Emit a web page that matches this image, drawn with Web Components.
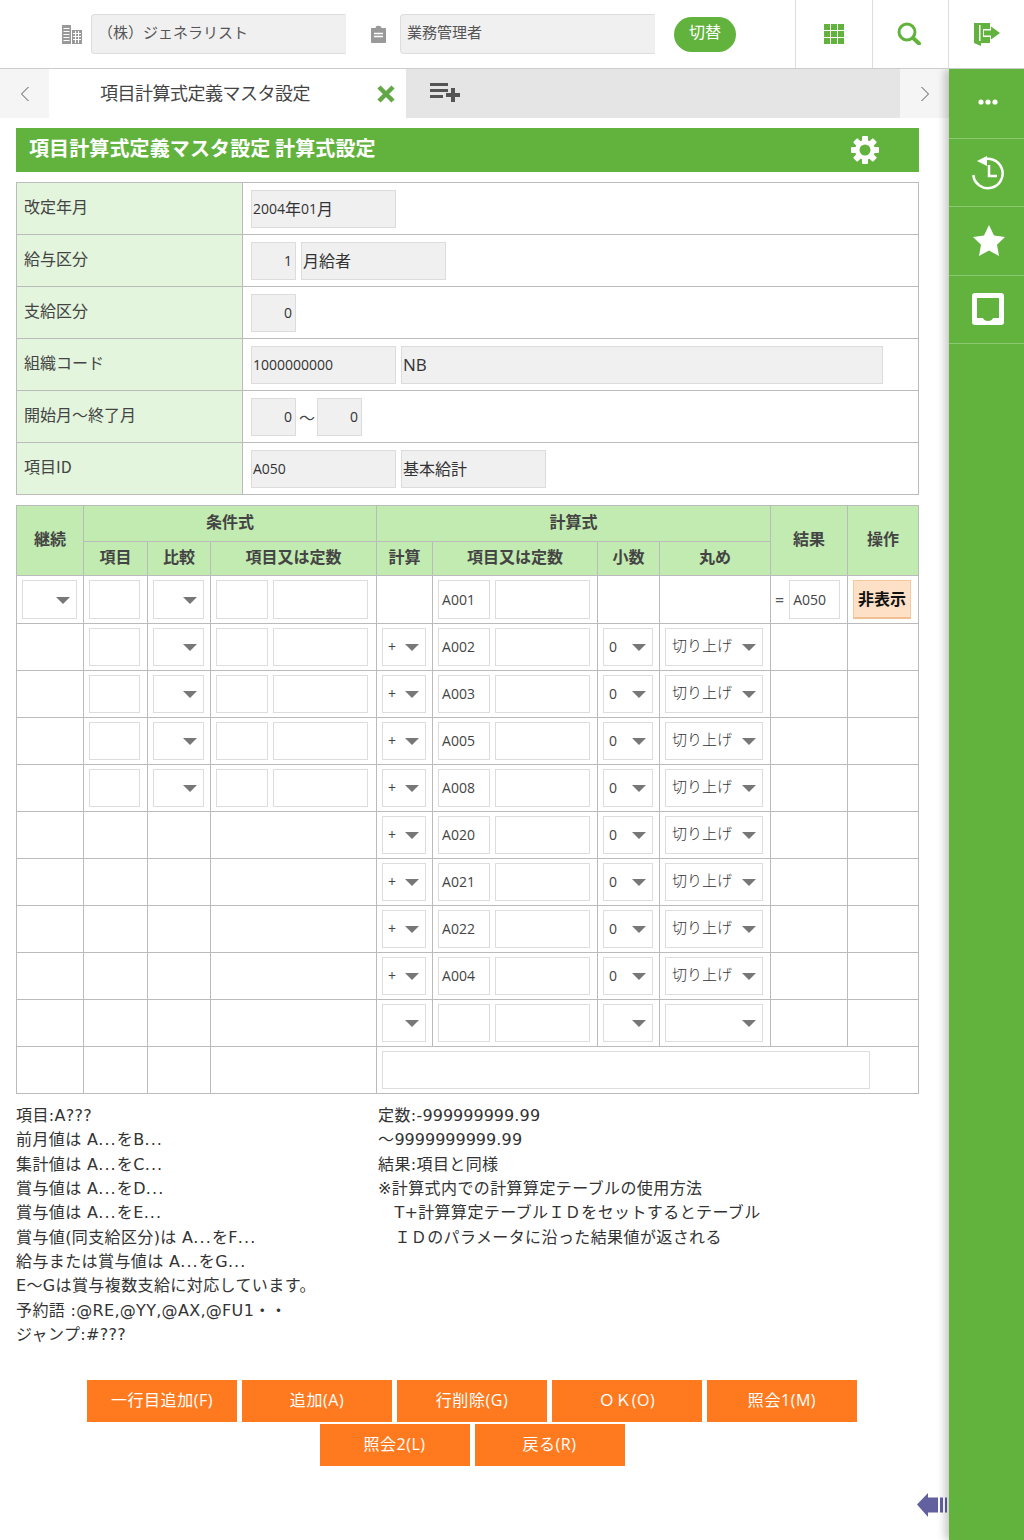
<!DOCTYPE html>
<html lang="ja"><head><meta charset="utf-8"><title>項目計算式定義マスタ設定</title>
<style>
html,body{margin:0;padding:0}
body{height:1540px;width:1024px;overflow:hidden;background:#fff;color:#333;font-family:"Noto Sans CJK JP",sans-serif;font-size:16px;display:flex;flex-direction:column;position:relative}
#row{flex:1;display:flex;min-height:0}
#main{flex:1;min-width:0;display:flex;flex-direction:column}
#content{padding:10px 30px 0 16px;display:flex;flex-direction:column}
x-back-arrow{position:absolute;left:917px;top:1492px}
</style></head><body>
<x-app-header></x-app-header>
<div id="row">
 <div id="main">
  <x-tab-bar></x-tab-bar>
  <div id="content">
   <x-title-bar>項目計算式定義マスタ設定 計算式設定</x-title-bar>
   <x-info-table></x-info-table>
   <x-calc-table></x-calc-table>
   <x-notes></x-notes>
   <x-action-buttons></x-action-buttons>
  </div>
 </div>
 <x-side-rail></x-side-rail>
</div>
<x-back-arrow></x-back-arrow>
<script>
const esc=s=>s.replace(/&/g,'&amp;').replace(/</g,'&lt;');
const mix=s=>esc(s).replace(/[^\x00-\x7f]+/g,m=>`<span class="j">${m}</span>`);
const noteMix=s=>esc(s).replace(/[^\x00-\x7f]+|\d{4,}|\.\.\./g,m=>{
  const c=/^\d/.test(m)?'d':m==='...'?'o':'j';
  return `<span class="${c}">${m}</span>`;
});
function def(name,css,html){
  customElements.define(name,class extends HTMLElement{
    connectedCallback(){
      if(this.shadowRoot)return;
      const r=this.attachShadow({mode:'open'});
      r.innerHTML=`<style>${css}</style>`+(typeof html==='function'?html(this):html);
    }
  });
}
def('x-field',`
:host{display:inline-block;box-sizing:border-box;flex:none;border:1px solid #ddd;background:#fff;font:14px/1 "Open Sans","Noto Sans CJK JP",sans-serif;color:#444;height:38px;vertical-align:top}
:host([ro]){background:#f0f0f0;border-color:#dcdcdc;color:#333}
:host([t]){height:39px}
:host([lg]){font-size:17px}
div{height:100%;display:flex;align-items:center;padding:0 3px 0 3px;box-sizing:border-box;white-space:pre}
:host([ro]) div{padding:0 2px 1px 1px}
:host([right]) div{justify-content:flex-end;padding-right:3px}
.j{font-size:16px;font-family:"Noto Sans CJK JP",sans-serif;position:relative;top:-1px}
`,e=>{e.style.width=e.getAttribute('w')+'px';return `<div>${mix(e.getAttribute('v')||'')}</div>`});
def('x-sel',`
:host{display:inline-flex;box-sizing:border-box;flex:none;position:relative;align-items:center;height:38px;border:1px solid #ddd;background:#fff;font:14px/1 "Open Sans","Noto Sans CJK JP",sans-serif;color:#444;padding:0 0 0 5px}
:host([t]){height:39px}
span{white-space:pre}
.j{font-size:15px;font-family:"Noto Sans CJK JP",sans-serif;font-weight:300;margin-left:1px;position:relative;top:-2px;color:#333}
i{position:absolute;right:6px;top:50%;margin-top:-3px;width:0;height:0;border-left:7px solid transparent;border-right:7px solid transparent;border-top:7px solid #777}
`,e=>{e.style.width=e.getAttribute('w')+'px';return `<span>${mix(e.getAttribute('v')||'')}</span><i></i>`});

def('x-app-header',`
:host{display:flex;align-items:center;height:68px;border-bottom:1px solid #ccc;background:#fff;position:relative;z-index:2;flex:none}
.ic{flex:none;display:block}
.box{box-sizing:border-box;width:255px;height:40px;background:#f0f0f0;border:1px solid #ddd;border-right-color:#eee;border-radius:4px 0 0 4px;display:flex;align-items:center;padding:0 6px 6px;color:#555;font-size:15px;flex:none}
.sw{margin-left:19px;width:62px;height:35px;border-radius:18px;background:#62b33d;color:#fff;font-size:16px;display:flex;align-items:center;justify-content:center;padding-bottom:6px;box-sizing:border-box;flex:none}
.cells{margin-left:auto;display:flex;height:100%}
.c{box-sizing:border-box;width:76px;height:100%;border-left:1px solid #ddd;display:flex;align-items:center;justify-content:center}
.c:first-child{width:77px}
`,`
<svg class="ic" style="margin-left:62px" width="20" height="19" viewBox="0 0 20 19"><path fill="#999" d="M0 0h9v19H0zM10 5h10v14H10z"/><path stroke="#fff" stroke-width="1" d="M1.500 3.500h6M1.500 6.500h6M1.500 9.500h6M1.500 12.500h6M1.500 15.500h6M11 8.500h8M11 11.500h8M11 14.500h8M13.500 6v12M16.500 6v12"/></svg>
<div class="box" style="margin-left:9px">（株）ジェネラリスト</div>
<svg class="ic" style="margin-left:25px" width="15" height="18" viewBox="0 0 15 18"><path fill="#999" d="M1 3h3.500c0-3 6-3 6 0H14c.6 0 1 .4 1 1v13c0 .6-.4 1-1 1H1c-.6 0-1-.4-1-1V4c0-.6.400-1 1-1z"/><path stroke="#fff" stroke-width="1.500" d="M3 8.500h9M3 11.500h9"/></svg>
<div class="box" style="margin-left:14px">業務管理者</div>
<div class="sw">切替</div>
<div class="cells">
<div class="c"><svg style="margin-top:-1px" width="20" height="20" viewBox="0 0 20 20" fill="#62b33d"><path d="M0 0h6v6H0zM7 0h6v6H7zM14 0h6v6h-6zM0 7h6v6H0zM7 7h6v6H7zM14 7h6v6h-6zM0 14h6v6H0zM7 14h6v6H7zM14 14h6v6h-6z"/></svg></div>
<div class="c"><svg style="margin:-2px 4px 0 0" width="24" height="23" viewBox="0 0 24 23" fill="none" stroke="#62b33d"><circle cx="10" cy="10" r="8" stroke-width="3"/><path d="M16 16l6 5.500" stroke-width="4" stroke-linecap="round"/></svg></div>
<div class="c"><svg width="26" height="23" viewBox="0 0 26 23"><path fill="#62b33d" d="M0 0h16v6H9v8h7v6H7v3l-7-3z"/><path fill="#fff" d="M5 2h1.500v16H5z"/><path fill="#62b33d" d="M10 7.500h7V3.500l9 6.500-9 6.500V12.500h-7z"/></svg></div>
</div>`);

def('x-tab-bar',`
:host{display:flex;height:49px;flex:none;background:#e5e5e5}
.ar{width:49px;background:#f5f5f5;display:flex;align-items:center;justify-content:center;flex:none}
.tab{width:357px;box-sizing:border-box;background:#fff;display:flex;align-items:center;padding:0 11px 0 51px;flex:none;font-size:18px;letter-spacing:-.5px;color:#444;justify-content:space-between}
.tab span{padding-bottom:4px}
.add{margin:-1px 0 0 24px;align-self:center;display:block}
.sp{flex:1}
`,`
<div class="ar"><svg width="10" height="16" viewBox="0 0 10 16" fill="none" stroke="#555"><path d="M8.500 1L1.500 8l7 7"/></svg></div>
<div class="tab"><span>項目計算式定義マスタ設定</span><svg width="18" height="18" viewBox="0 0 18 18" stroke="#62a745" stroke-width="4.500"><path d="M2 2l14 14M16 2L2 16"/></svg></div>
<svg class="add" width="30" height="20" viewBox="0 0 30 20" fill="#555"><path d="M0 0h18v3H0zM0 6h18v3H0zM0 12h13v3H0zM21 5h4v5h5v4h-5v5h-4v-5h-5v-4h5z"/></svg>
<div class="sp"></div>
<div class="ar"><svg width="10" height="16" viewBox="0 0 10 16" fill="none" stroke="#555"><path d="M1.500 1l7 7-7 7"/></svg></div>`);

def('x-title-bar',`
:host{display:flex;align-items:center;height:44px;background:#62b33d;color:#fff;font-size:20px;font-weight:700;padding:0 40px 0 13px;flex:none;justify-content:space-between;letter-spacing:.12px}
span{padding-bottom:5px}
`,`<span><slot></slot></span>
<svg width="28" height="28" viewBox="0 0 28 28" fill="#fff"><rect x="11" y="0" width="6" height="28" rx="1"/><rect x="11" y="0" width="6" height="28" rx="1" transform="rotate(45 14 14)"/><rect x="11" y="0" width="6" height="28" rx="1" transform="rotate(90 14 14)"/><rect x="11" y="0" width="6" height="28" rx="1" transform="rotate(135 14 14)"/><circle cx="14" cy="14" r="10" fill="#fff"/><circle cx="14" cy="14" r="5.500" fill="#62b33d"/></svg>`);

const infoRows=[
 ['改定年月',[[145,'2004年01月']]],
 ['給与区分',[[45,'1',1],[145,'月給者']]],
 ['支給区分',[[45,'0',1]]],
 ['組織コード',[[145,'1000000000'],[482,'NB',0,1]]],
 ['開始月～終了月',[[45,'0',1],'～',[45,'0',1]]],
 ['項目ID',[[145,'A050'],[145,'基本給計']]]];
def('x-info-table',`
:host{display:block;margin-top:10px}
table{border-collapse:collapse;width:903px;table-layout:fixed}
th,td{border:1px solid #bbb;height:51px;padding:0}
tr{height:52px}
th{width:226px;background:#e3f5dd;font-weight:400;text-align:left;padding:0 0 6px 7px;box-sizing:border-box;color:#444}
td .w{display:flex;gap:5px;align-items:center;padding:1px 0 0 8px}
td .w b{font-weight:400;margin:0 -3px 0 -2px;color:#444}
`,`<table>${infoRows.map(([l,f])=>`<tr><th>${l}</th><td><div class="w">${f.map(x=>typeof x==='string'?`<b>${x}</b>`:`<x-field ro w="${x[0]}" ${x[2]?'right':''} ${x[3]?'lg':''} v="${x[1]}"></x-field>`).join('')}</div></td></tr>`).join('')}</table>`);

const S=(w,v='',t='')=>`<x-sel w="${w}" v="${v}" ${t}></x-sel>`;
const F=(w,v='',t='')=>`<x-field w="${w}" v="${v}" ${t}></x-field>`;
const condCells=t=>`<td><div class="w p5">${F(51,'',t)}</div></td><td><div class="w p5">${S(51,'',t)}</div></td><td><div class="w p5">${F(52,'',t)}${F(95,'',t)}</div></td>`;
const rows=[
 `<tr class="f"><td><div class="w p5">${S(55,'','t')}</div></td>${condCells('t')}<td></td><td><div class="w p5">${F(52,'A001','t')}${F(95,'','t')}</div></td><td></td><td></td><td><div class="w eq"><span>=</span>${F(51,'A050','t')}</div></td><td><div class="w p5"><x-hide-btn>非表示</x-hide-btn></div></td></tr>`];
const tail=(id,plus=true)=>`<td><div class="w p5">${S(44,plus?'+':'')}</div></td><td><div class="w p5">${F(52,id)}${F(95)}</div></td><td><div class="w p5">${S(50,plus?'0':'')}</div></td><td><div class="w p5">${S(98,plus?'切り上げ':'')}</div></td><td></td><td></td>`;
['A002','A003','A005','A008'].forEach(id=>rows.push(`<tr><td></td>${condCells('')}${tail(id)}</tr>`));
['A020','A021','A022','A004'].forEach(id=>rows.push(`<tr><td></td><td></td><td></td><td></td>${tail(id)}</tr>`));
rows.push(`<tr><td></td><td></td><td></td><td></td>${tail('',false)}</tr>`);
rows.push(`<tr><td></td><td></td><td></td><td></td><td colspan="6"><div class="w p5">${F(488)}</div></td></tr>`);
def('x-hide-btn',`
:host{display:flex;box-sizing:border-box;width:58px;height:39px;align-items:center;justify-content:center;background:#fde0c5;border:1px solid #f5c9a0;border-bottom:2px solid #f1be91;font-weight:700;font-size:16px;color:#111;padding-bottom:3px}
`,`<slot></slot>`);
def('x-calc-table',`
:host{display:block;margin-top:10px}
table{border-collapse:collapse;width:903px;table-layout:fixed}
th,td{border:1px solid #bbb;padding:0}
th{background:#c2ebb1;font-size:16px;font-weight:700;color:#444;padding-bottom:6px;box-sizing:border-box}
tr.h1{height:36px}tr.h2{height:34px}tr.f{height:48px}tr{height:47px}
.w{display:flex;align-items:center;gap:5px}
.p5{padding-left:5px}
.eq{padding-left:4px;gap:5px;color:#555;font:16px "Open Sans",sans-serif}
`,`<table><colgroup><col style="width:67px"><col style="width:64px"><col style="width:63px"><col style="width:166px"><col style="width:56px"><col style="width:165px"><col style="width:62px"><col style="width:111px"><col style="width:77px"><col></colgroup>
<tr class="h1"><th rowspan="2">継続</th><th colspan="3">条件式</th><th colspan="4">計算式</th><th rowspan="2">結果</th><th rowspan="2">操作</th></tr>
<tr class="h2"><th>項目</th><th>比較</th><th>項目又は定数</th><th>計算</th><th>項目又は定数</th><th>小数</th><th>丸め</th></tr>
${rows.join('')}</table>`);

const notesL=['項目:A???','前月値は A...をB...','集計値は A...をC...','賞与値は A...をD...','賞与値は A...をE...','賞与値(同支給区分)は A...をF...','給与または賞与値は A...をG...','E～Gは賞与複数支給に対応しています。','予約語 :@RE,@YY,@AX,@FU1・・','ジャンプ:#???'];
const notesR=['定数:-999999999.99','～9999999999.99','結果:項目と同様','※計算式内での計算算定テーブルの使用方法','　T+計算算定テーブルＩＤをセットするとテーブル','　ＩＤのパラメータに沿った結果値が返される'];
def('x-notes',`
:host{display:flex;margin-top:10px;font:16px/24.350px "DejaVu Sans","Noto Sans CJK JP",sans-serif;color:#333;flex:none;letter-spacing:.3px}
.a{width:362px;flex:none}
div div{white-space:pre}
.j{letter-spacing:.4px}.d{letter-spacing:0}.o{letter-spacing:1.100px}
`,`<div class="a">${notesL.map(s=>`<div>${noteMix(s)}</div>`).join('')}</div><div>${notesR.map(s=>`<div>${noteMix(s)}</div>`).join('')}</div>`);

const btn=s=>`<div class="b">${s}</div>`;
def('x-action-buttons',`
:host{display:flex;flex-direction:column;gap:2px;margin-top:33px;width:912px;flex:none}
.r{display:flex;justify-content:center;gap:5px}
.b{width:150px;height:42px;background:#ff7a1e;color:#fff;display:flex;align-items:center;justify-content:center;font:16px "Open Sans","Noto Sans CJK JP",sans-serif;letter-spacing:.55px;padding-bottom:4px;box-sizing:border-box}
`,`<div class="r">${['一行目追加(F)','追加(A)','行削除(G)','ＯＫ(O)','照会1(M)'].map(btn).join('')}</div><div class="r">${['照会2(L)','戻る(R)'].map(btn).join('')}</div>`);

def('x-side-rail',`
:host{display:flex;flex-direction:column;width:75px;flex:none;background:#62b33d;box-shadow:-4px 0 8px rgba(0,0,0,.22);position:relative;z-index:1}
.i{box-sizing:border-box;height:68.400px;border-bottom:1px solid #8cc971;display:flex;align-items:center;justify-content:center;flex:none}
svg{display:block}
`,`
<div class="i" style="height:70px;padding:0 0 4px 2px"><svg width="20" height="6" viewBox="0 0 20 6" fill="#fff"><circle cx="3" cy="3" r="2.600"/><circle cx="10" cy="3" r="2.600"/><circle cx="17" cy="3" r="2.600"/></svg></div>
<div class="i" style="padding:1px 0 0 2px"><svg width="34" height="36" viewBox="0 0 34 36" fill="none" stroke="#fff"><path stroke-width="2.500" d="M10 5.500A14.700 14.700 0 1 1 2.300 20"/><path fill="#fff" stroke="none" d="M6 6l10-5v10z"/><path stroke-width="2.500" d="M18 10v11h8"/></svg></div>
<div class="i" style="padding:0 0 2px 4px"><svg width="32" height="31" viewBox="0 0 32 31" fill="#fff"><path d="M16 0l5 10.500 11 1.500-8 7.700 2 11.300-10-5.400L6 31l2-11.300L0 12l11-1.500z"/></svg></div>
<div class="i" style="padding:0 0 0 2px"><svg width="32" height="32" viewBox="0 0 32 32"><rect width="32" height="32" rx="3" fill="#fff"/><path fill="#62b33d" d="M5 5h22v20h-6c-.5 2-2.500 3-5 3s-4.500-1-5-3H5z"/></svg></div>`);

def('x-back-arrow',`:host{display:block;width:31px;height:26px}svg{display:block}`,
`<svg width="31" height="26" viewBox="0 0 31 26" fill="#6360a0"><path d="M0 12.500L11 1v4.500h10v15H11V25zM23 5.500h3v15h-3zM28 5.500h2v15h-2z"/></svg>`);
</script>
</body></html>
